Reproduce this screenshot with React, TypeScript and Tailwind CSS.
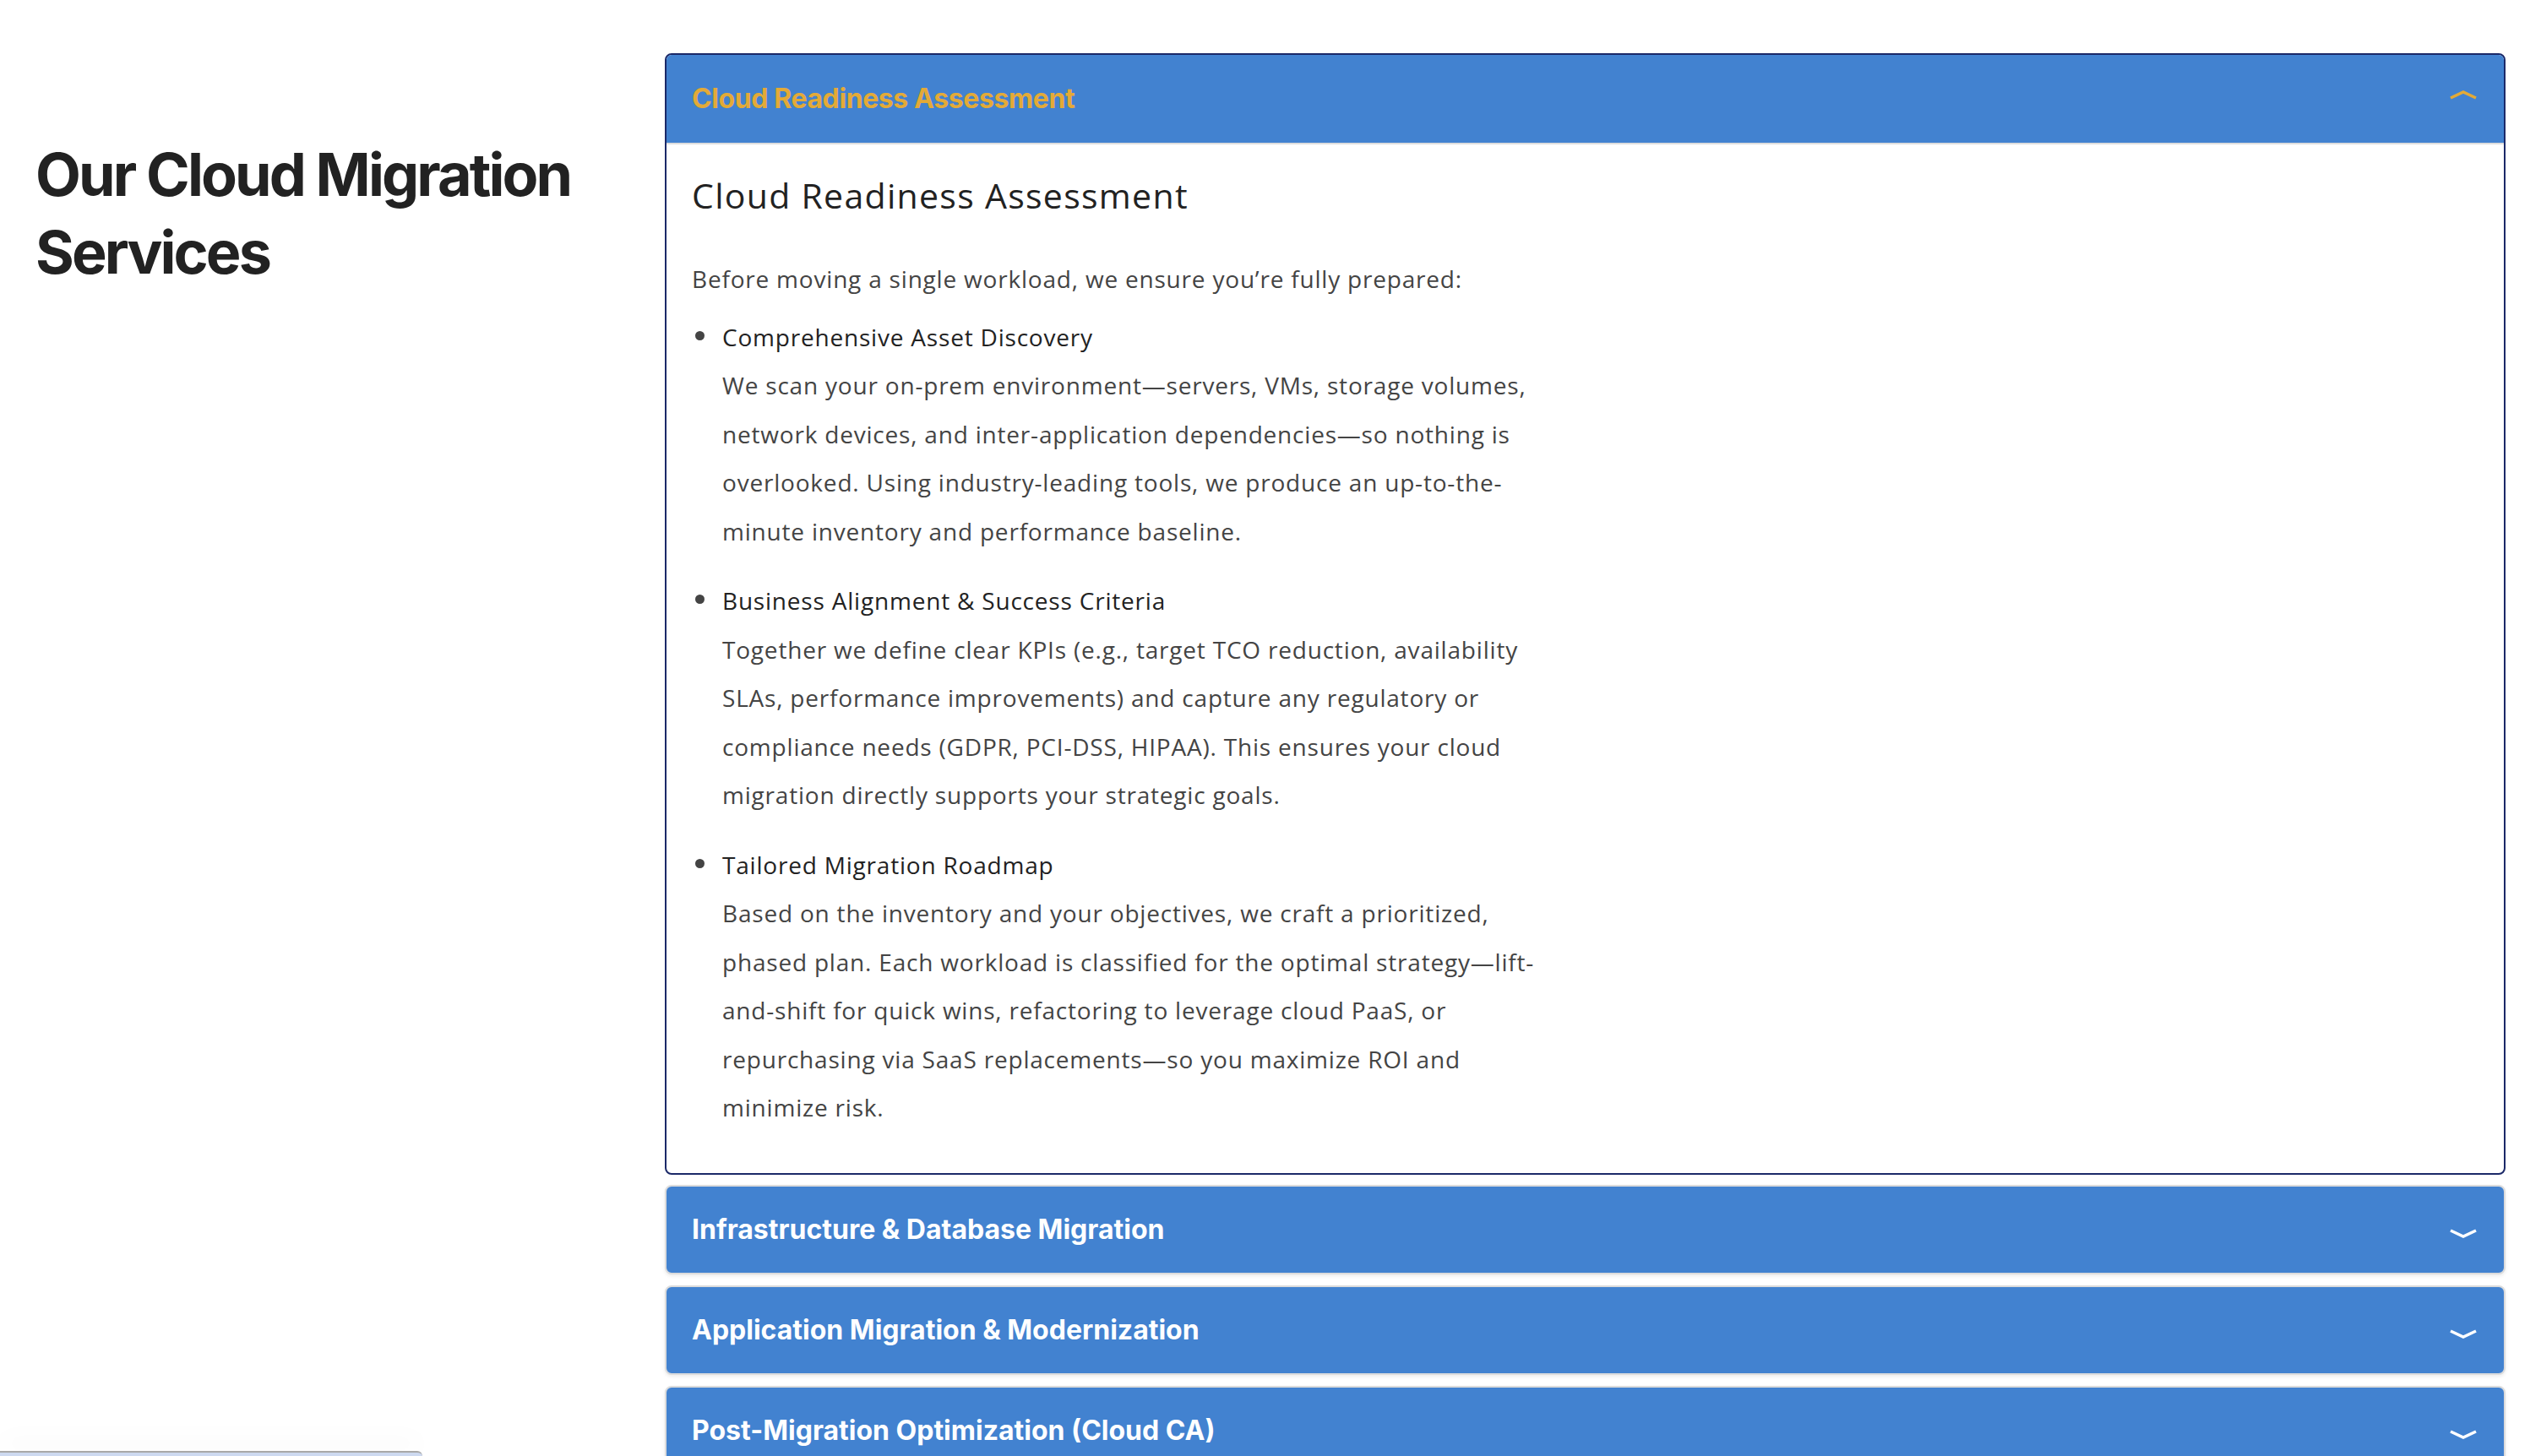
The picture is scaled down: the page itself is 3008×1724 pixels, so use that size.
import { useState } from "react";

const HEAD = { fontFamily: "Inter, 'Noto Sans', sans-serif" };
const BODY = { fontFamily: "'Open Sans', 'Noto Sans', sans-serif" };

type Section = { title: string; intro?: string; items?: { title: string; lines: string[] }[] };

const sections: Section[] = [
  {
    title: "Cloud Readiness Assessment",
    intro: "Before moving a single workload, we ensure you’re fully prepared:",
    items: [
      {
        title: "Comprehensive Asset Discovery",
        lines: [
          "We scan your on-prem environment—servers, VMs, storage volumes,",
          "network devices, and inter-application dependencies—so nothing is",
          "overlooked. Using industry-leading tools, we produce an up-to-the-",
          "minute inventory and performance baseline.",
        ],
      },
      {
        title: "Business Alignment & Success Criteria",
        lines: [
          "Together we define clear KPIs (e.g., target TCO reduction, availability",
          "SLAs, performance improvements) and capture any regulatory or",
          "compliance needs (GDPR, PCI-DSS, HIPAA). This ensures your cloud",
          "migration directly supports your strategic goals.",
        ],
      },
      {
        title: "Tailored Migration Roadmap",
        lines: [
          "Based on the inventory and your objectives, we craft a prioritized,",
          "phased plan. Each workload is classified for the optimal strategy—lift-",
          "and-shift for quick wins, refactoring to leverage cloud PaaS, or",
          "repurchasing via SaaS replacements—so you maximize ROI and",
          "minimize risk.",
        ],
      },
    ],
  },
  { title: "Infrastructure & Database Migration" },
  { title: "Application Migration & Modernization" },
  { title: "Post-Migration Optimization (Cloud CA)" },
];

function Chevron({ up, color }: { up?: boolean; color: string }) {
  return (
    <svg width="32" height="12" viewBox="0 0 32 12" fill="none">
      <polyline
        points={up ? "1,10 16,3 31,10" : "1,2 16,9 31,2"}
        stroke={color}
        strokeWidth="3.5"
        strokeLinejoin="miter"
      />
    </svg>
  );
}

export default function App() {
  const [open, setOpen] = useState(0);

  return (
    <div className="min-h-screen bg-white text-[#222]">
      <div className="flex px-[42px] pt-[63px]">
        {/* Left heading */}
        <div className="w-[745px] shrink-0">
          <h2
            style={HEAD}
            className="mt-[98px] text-[70px] font-bold leading-[92px] tracking-[-2.9px] text-[#222]"
          >
            Our Cloud Migration
            <br />
            Services
          </h2>
        </div>

        {/* Accordion */}
        <div className="flex flex-1 flex-col gap-[13px]">
          {sections.map((s, i) =>
            open === i ? (
              <div key={s.title} className="-mb-px overflow-hidden rounded-[8px] border-2 border-[#1b2968]">
                <button
                  onClick={() => setOpen(-1)}
                  className="flex h-[106px] w-full items-center justify-between border-b-2 border-[#dddddd] bg-[#4282d0] pl-[30px] pr-[32px]"
                >
                  <span style={HEAD} className="text-[32px] font-bold tracking-[-0.4px] text-[#e3aa37]">
                    {s.title}
                  </span>
                  <span className="-mt-[10px]">
                    <Chevron up color="#e3aa37" />
                  </span>
                </button>
                <div style={BODY} className="px-[30px] pb-[48px] pt-[36px]">
                  <h3 className="text-[41px] font-normal leading-[48px] tracking-[1.3px] text-[#222]">
                    {s.title}
                  </h3>
                  <p className="mt-[47px] text-[28px] leading-[57.5px] tracking-[0.8px] text-[#444]">{s.intro}</p>
                  <ul className="mt-[11px] flex flex-col gap-[25px]">
                    {s.items?.map((it) => (
                      <li key={it.title} className="flex text-[28px] leading-[57.5px] tracking-[0.8px]">
                        <span className="flex w-[36px] shrink-0 items-start pl-[4px] pt-[21px]">
                          <span className="h-[11px] w-[11px] rounded-full bg-[#444]" />
                        </span>
                        <div>
                          <div className="text-[#222]">{it.title}</div>
                          {it.lines.map((l) => (
                            <div key={l} className="whitespace-nowrap text-[#444]">
                              {l}
                            </div>
                          ))}
                        </div>
                      </li>
                    ))}
                  </ul>
                </div>
              </div>
            ) : (
              <button
                key={s.title}
                onClick={() => setOpen(i)}
                className="flex h-[106px] w-full shrink-0 items-center justify-between rounded-[8px] border-2 border-[#dcdcdc] bg-[#4282d0] pl-[30px] pr-[32px] shadow-[0_2px_4px_rgba(0,0,0,0.08)]"
              >
                <span style={HEAD} className="text-[32px] font-bold tracking-[0px] text-white">
                  {s.title}
                </span>
                <span className="mt-[10px]">
                  <Chevron color="#ffffff" />
                </span>
              </button>
            )
          )}
        </div>
      </div>

      {/* cut-off widget at the bottom-left */}
      <div className="fixed bottom-0 left-0 h-[6px] w-[500px] rounded-tr-[6px] border-t-2 border-[#a8a8a8] bg-[#cdd9f0] shadow-[0_-12px_30px_rgba(0,0,0,0.06)]" />
    </div>
  );
}
